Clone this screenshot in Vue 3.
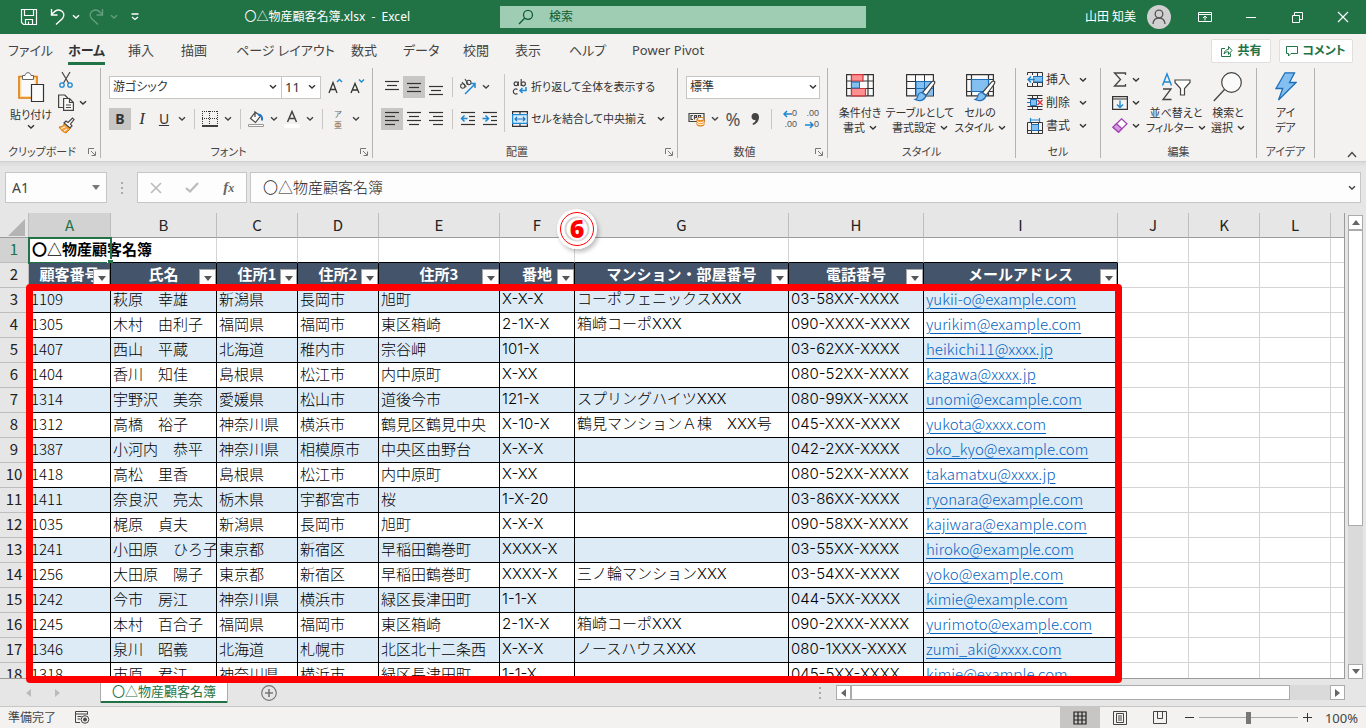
<script setup>
import { h } from 'vue'

const Chev = () =>
  h('svg', { class: 'chev', width: 8, height: 6, viewBox: '0 0 8 6', 'aria-hidden': 'true' }, [
    h('path', { d: 'M1 1.2 4 4 7 1.2', fill: 'none', stroke: 'currentColor', 'stroke-width': 1.4 }),
  ])

const Launcher = () =>
  h('svg', { width: 8, height: 8, viewBox: '0 0 8 8', 'aria-hidden': 'true' }, [
    h('path', { d: 'M.5 6V.5H6M3 3l4 4M7.5 3.500V7.500H3.500', fill: 'none', stroke: '#777', 'stroke-width': 1 }),
  ])

const Lines = (props) =>
  h('svg', { width: 16, height: 18, viewBox: '0 0 16 18', 'aria-hidden': 'true' },
    props.rows.map(([x, y, w]) =>
      h('path', { d: `M${x} ${y}.5h${w}`, stroke: '#333', 'stroke-width': 1.2 }))
      .concat(props.arrow ? [h('path', { d: props.arrow, fill: 'none', stroke: '#1e88d2', 'stroke-width': 1.5 })] : []))
Lines.props = ['rows', 'arrow']

const tabs = ['ファイル', 'ホーム', '挿入', '描画', 'ページ レイアウト', '数式', 'データ', '校閲', '表示', 'ヘルプ', 'Power Pivot']

const vertical = [
  { name: '上揃え', rows: [[1, 3, 14], [3, 7, 10], [1, 11, 14]] },
  { name: '上下中央揃え', on: true, rows: [[1, 5, 14], [3, 9, 10], [1, 13, 14]] },
  { name: '下揃え', rows: [[1, 8, 14], [3, 12, 10], [1, 16, 14]] },
]
const horizontal = [
  { name: '左揃え', on: true, rows: [[1, 2, 14], [1, 6, 10], [1, 10, 14], [1, 14, 10]] },
  { name: '中央揃え', rows: [[1, 2, 14], [3, 6, 10], [1, 10, 14], [3, 14, 10]] },
  { name: '右揃え', rows: [[1, 2, 14], [5, 6, 10], [1, 10, 14], [5, 14, 10]] },
]
const indents = [
  { name: 'インデントを減らす', rows: [[1, 2, 14], [9, 6, 6], [9, 10, 6], [1, 14, 14]], arrow: 'M7.500 8.500H2M4.500 5.500 1.500 8.500l3 3' },
  { name: 'インデントを増やす', rows: [[1, 2, 14], [9, 6, 6], [9, 10, 6], [1, 14, 14]], arrow: 'M.5 8.500H6M3.500 5.500l3 3-3 3' },
]

const letters = ['A', 'B', 'C', 'D', 'E', 'F', 'G', 'H', 'I', 'J', 'K', 'L']
const heads = ['顧客番号', '氏名', '住所1', '住所2', '住所3', '番地', 'マンション・部屋番号', '電話番号', 'メールアドレス']
const rows = [
  ['1109', '萩原　幸雄', '新潟県', '長岡市', '旭町', 'X-X-X', 'コーポフェニックスXXX', '03-58XX-XXXX', 'yukii-o@example.com'],
  ['1305', '木村　由利子', '福岡県', '福岡市', '東区箱崎', '2-1X-X', '箱崎コーポXXX', '090-XXXX-XXXX', 'yurikim@example.com'],
  ['1407', '西山　平蔵', '北海道', '稚内市', '宗谷岬', '101-X', '', '03-62XX-XXXX', 'heikichi11@xxxx.jp'],
  ['1404', '香川　知佳', '島根県', '松江市', '内中原町', 'X-XX', '', '080-52XX-XXXX', 'kagawa@xxxx.jp'],
  ['1314', '宇野沢　美奈', '愛媛県', '松山市', '道後今市', '121-X', 'スプリングハイツXXX', '080-99XX-XXXX', 'unomi@excample.com'],
  ['1312', '高橋　裕子', '神奈川県', '横浜市', '鶴見区鶴見中央', 'X-10-X', '鶴見マンションＡ棟　XXX号', '045-XXX-XXXX', 'yukota@xxxx.com'],
  ['1387', '小河内　恭平', '神奈川県', '相模原市', '中央区由野台', 'X-X-X', '', '042-2XX-XXXX', 'oko_kyo@example.com'],
  ['1418', '高松　里香', '島根県', '松江市', '内中原町', 'X-XX', '', '080-52XX-XXXX', 'takamatxu@xxxx.jp'],
  ['1411', '奈良沢　亮太', '栃木県', '宇都宮市', '桜', '1-X-20', '', '03-86XX-XXXX', 'ryonara@example.com'],
  ['1035', '梶原　貞夫', '新潟県', '長岡市', '旭町', 'X-X-X', '', '090-58XX-XXXX', 'kajiwara@example.com'],
  ['1241', '小田原　ひろ子', '東京都', '新宿区', '早稲田鶴巻町', 'XXXX-X', '', '03-55XX-XXXX', 'hiroko@example.com'],
  ['1256', '大田原　陽子', '東京都', '新宿区', '早稲田鶴巻町', 'XXXX-X', '三ノ輪マンションXXX', '03-54XX-XXXX', 'yoko@example.com'],
  ['1242', '今市　房江', '神奈川県', '横浜市', '緑区長津田町', '1-1-X', '', '044-5XX-XXXX', 'kimie@example.com'],
  ['1245', '本村　百合子', '福岡県', '福岡市', '東区箱崎', '2-1X-X', '箱崎コーポXXX', '090-2XXX-XXXX', 'yurimoto@example.com'],
  ['1346', '泉川　昭義', '北海道', '札幌市', '北区北十二条西', 'X-X-X', 'ノースハウスXXX', '080-1XXX-XXXX', 'zumi_aki@xxxx.com'],
  ['1318', '市原　君江', '神奈川県', '横浜市', '緑区長津田町', '1-1-X', '', '045-5XX-XXXX', 'kimie@example.com'],
]
</script>

<template>
  <div class="app">
    <header class="titlebar">
      <div class="tb-left">
        <button class="qat" aria-label="上書き保存">
          <svg width="18" height="18" viewBox="0 0 18 18" fill="none" stroke="#fff" stroke-width="1.2"><path d="M1.500 1.500h15v15h-13l-2-2zM4.500 1.500v6h9v-6M5.500 16.500v-5h7v5M8.500 16.500v-3" /></svg>
        </button>
        <button class="qat wide" aria-label="元に戻す">
          <svg width="16" height="18" viewBox="0 0 16 18" fill="none" stroke="#fff" stroke-width="1.4"><path d="M1.500 1v6h6M1.500 7C4 3.500 7 1.500 10 2.200c4 1 5 5.500 2.500 8.300L6 16.500" /></svg>
          <Chev />
        </button>
        <button class="qat wide dim" aria-label="やり直し">
          <svg width="16" height="18" viewBox="0 0 16 18" fill="none" stroke="#fff" stroke-width="1.400"><path d="M14.500 1v6h-6M14.500 7C12 3.500 9 1.500 6 2.200c-4 1-5 5.500-2.500 8.300L10 16.500" /></svg>
          <Chev />
        </button>
        <button class="qat" aria-label="クイック アクセス ツール バーのユーザー設定">
          <svg width="8" height="8" viewBox="0 0 8 8" fill="none" stroke="#fff" stroke-width="1.300"><path d="M.5 1h7M1 4l3 2.500L7 4" /></svg>
        </button>
        <h1>〇△物産顧客名簿.xlsx&nbsp; -&nbsp; Excel</h1>
      </div>
      <label class="search">
        <svg width="16" height="16" viewBox="0 0 16 16" fill="none" stroke="#0e5c33" stroke-width="1.300"><circle cx="10" cy="5.800" r="4.500" /><path d="M6.800 9 1 15" /></svg>
        <input type="text" placeholder="検索" aria-label="検索" />
      </label>
      <div class="tb-right">
        <span class="user">山田 知美</span>
        <svg class="avatar" width="24" height="24" viewBox="0 0 24 24" fill="none"><circle cx="12" cy="12" r="12" fill="#d0d0d0" /><circle cx="12" cy="9" r="3.800" stroke="#555" stroke-width="1.300" /><path d="M6 19c.3-4 2.700-6 6-6s5.700 2 6 6" stroke="#555" stroke-width="1.300" /></svg>
        <button class="win" aria-label="リボンの表示オプション"><svg width="14" height="12" viewBox="0 0 14 12" fill="none" stroke="#fff"><path d="M.5 1.500h13v9H.5zM.5 3.500h13M7 9.500v-4M5 7l2-2 2 2" /></svg></button>
        <button class="win" aria-label="最小化"><svg width="12" height="12" viewBox="0 0 12 12" stroke="#fff"><path d="M1 6.500h10" /></svg></button>
        <button class="win" aria-label="元のサイズに戻す"><svg width="11" height="11" viewBox="0 0 11 11" fill="none" stroke="#fff"><path d="M.5 3.500h7v7h-7zM2.500 3.500v-3h8v7h-3" /></svg></button>
        <button class="win" aria-label="閉じる"><svg width="12" height="12" viewBox="0 0 12 12" stroke="#fff" stroke-width="1.200"><path d="m1 1 10 10M11 1 1 11" /></svg></button>
      </div>
    </header>

    <nav class="tabbar">
      <div class="tabs">
        <button v-for="t in tabs" :key="t" :class="{ current: t === 'ホーム' }">{{ t }}</button>
      </div>
      <button class="pill share">
        <svg width="13" height="13" viewBox="0 0 13 13" fill="none" stroke="#217346"><path d="M5 3.500H1.500v8h9v-3M4 9c.5-3 2-4.500 4.500-4.500v-3l3.500 4-3.500 4V6.800C6.500 6.800 5 7.500 4 9z" /></svg>共有
      </button>
      <button class="pill comment">
        <svg width="12" height="12" viewBox="0 0 12 12" fill="none" stroke="#217346"><path d="M.5 1.500h11v7H5L2.500 11V8.500h-2z" /></svg>コメント
      </button>
    </nav>

    <section class="ribbon">
      <div class="group g-clip">
        <div class="body">
          <button class="big paste">
            <svg width="28" height="31" viewBox="0 0 28 31" fill="none">
              <path d="M2 4.500h18v21.500H2z" fill="#fbdfa6" stroke="#e07b0c" stroke-width="1.600" />
              <path d="M4.500 7h13v17h-13z" fill="#fafafa" />
              <path d="M5.500 7.500v-4H8C8.500 1.500 9.500.7 11 .7s2.500.8 3 2.800h2.500v4z" fill="#fff" stroke="#666" />
              <path d="M14.500 12.500h12v17h-12z" fill="#fafafa" stroke="#333" stroke-width="1.200" />
            </svg>
            <span>貼り付け</span><Chev />
          </button>
          <div class="stack">
            <button aria-label="切り取り"><svg width="16" height="18" viewBox="0 0 16 18" fill="none"><path d="m4 1 6.500 11M12 1 5.500 12" stroke="#444" stroke-width="1.200" /><circle cx="4" cy="14" r="2.200" stroke="#1e88d2" stroke-width="1.300" /><circle cx="12" cy="14" r="2.200" stroke="#1e88d2" stroke-width="1.300" /></svg></button>
            <button aria-label="コピー"><svg width="16" height="17" viewBox="0 0 16 17" fill="none" stroke="#444" stroke-width="1.200"><path d="M5 13.500H.6V1h6.200l3 3" /><path d="M5.600 4.500h6l3.800 4v7.900H5.600zM11.500 4.500v4h3.900M8 11h5M8 13.500h5" fill="#fafafa" /></svg><Chev /></button>
            <button aria-label="書式のコピー/貼り付け"><svg width="17" height="17" viewBox="0 0 17 17" fill="none"><path d="M1 10c3 0 4-1 5.500-3.500l6 5L8 16C6 15.500 3 13.500 1 10z" fill="#f7a13b" stroke="#e07b0c" /><path d="M3 11.500 7 10M6 14l3-2" stroke="#fff" /><path d="m6 6 2-2 2 1.500L14.500 1 16 2.500 12.500 7l1.500 2-2 2z" fill="#fafafa" stroke="#444" stroke-width="1.200" /></svg></button>
          </div>
        </div>
        <footer><span>クリップボード</span><button aria-label="クリップボードの設定"><Launcher /></button></footer>
      </div>

      <div class="group g-font">
        <div class="body rows">
          <div class="line">
            <button class="combo name"><span>游ゴシック</span><Chev /></button><button class="combo size"><span>11</span><Chev /></button>
            <button class="ico" aria-label="フォント サイズの拡大"><svg width="18" height="18" viewBox="0 0 18 18" fill="none"><path d="M2 15 6 4.500 10 15M3.300 11.500h5.400" stroke="#333" stroke-width="1.300" /><path d="m10 4 2.500-2.500L15 4" stroke="#1e88d2" stroke-width="1.400" /></svg></button>
            <button class="ico" aria-label="フォント サイズの縮小"><svg width="18" height="18" viewBox="0 0 18 18" fill="none"><path d="M2 15 6 5.500 10 15M3.300 12h5.400" stroke="#333" stroke-width="1.300" /><path d="m10 1.500 2.500 2.500L15 1.500" stroke="#1e88d2" stroke-width="1.400" /></svg></button>
          </div>
          <div class="line">
            <button class="ico on"><b>B</b></button>
            <button class="ico"><i>I</i></button>
            <button class="ico"><u>U</u></button>
            <button class="dd" aria-label="下線の種類"><Chev /></button>
            <span class="sep"></span>
            <button class="ico" aria-label="罫線"><svg width="16" height="16" viewBox="0 0 16 16" fill="none" stroke="#333"><path d="M.5 0v14M15.500 0v14M0 .5h16M7.500 0v14M0 7.500h16" stroke-dasharray="1 1" /><path d="M0 15h16" stroke="#000" stroke-width="1.500" /></svg></button>
            <button class="dd" aria-label="罫線の種類"><Chev /></button>
            <span class="sep"></span>
            <button class="ico" aria-label="塗りつぶしの色"><svg width="18" height="18" viewBox="0 0 18 18" fill="none"><path d="M8 2.500 3.500 8.500l5 4 5-6.500-5.500-4zM8 7V1.500" fill="#fafafa" stroke="#444" stroke-width="1.200" /><path d="M11 4.500c3 0 4.500 2 4 6" stroke="#1e78c8" stroke-width="2" /><path d="M1.500 14.500h15v2h-15z" fill="#fff" stroke="#999" /></svg></button>
            <button class="dd" aria-label="塗りつぶしの色の選択"><Chev /></button>
            <button class="ico" aria-label="フォントの色"><svg width="18" height="18" viewBox="0 0 18 18" fill="none"><path d="M4.500 12 9 1.500 13.500 12M6 8.500h6" stroke="#444" stroke-width="1.500" /><path d="M1 14h16v4H1z" fill="#fff" /></svg></button>
            <button class="dd" aria-label="フォントの色の選択"><Chev /></button>
            <span class="sep"></span>
            <button class="ico ruby" aria-label="ふりがなの表示"><small>ア</small><small>亜</small></button>
            <button class="dd" aria-label="ふりがなの設定"><Chev /></button>
          </div>
        </div>
        <footer><span>フォント</span><button aria-label="フォントの設定"><Launcher /></button></footer>
      </div>

      <div class="group g-align">
        <div class="body">
          <div class="rows">
            <div class="line">
              <button v-for="a in vertical" :key="a.name" class="ico" :class="{ on: a.on }" :aria-label="a.name"><Lines :rows="a.rows" /></button>
              <span class="sep"></span>
              <button class="ico" aria-label="方向"><svg width="18" height="18" viewBox="0 0 18 18" fill="none"><g stroke="#444" stroke-width="1.100"><circle cx="3.800" cy="8" r="2.200" /><path d="m3 4 4.300 5.200M6 1l3.500 5.800" /><circle cx="9.800" cy="4.500" r="2.200" /></g><path d="M6 16 16 6M11.500 5.500H16V10" stroke="#1e88d2" stroke-width="1.500" /></svg></button>
              <button class="dd" aria-label="方向の選択"><Chev /></button>
            </div>
            <div class="line">
              <button v-for="a in horizontal" :key="a.name" class="ico" :class="{ on: a.on }" :aria-label="a.name"><Lines :rows="a.rows" /></button>
              <span class="sep"></span>
              <button v-for="a in indents" :key="a.name" class="ico" :aria-label="a.name"><Lines :rows="a.rows" :arrow="a.arrow" /></button>
            </div>
          </div>
          <span class="tall"></span>
          <div class="rows texts">
            <button class="line"><svg width="16" height="18" viewBox="0 0 16 18" fill="none" stroke-width="1.200"><g stroke="#444"><circle cx="4" cy="5.800" r="1.900" /><path d="M6.300 3.500V8M9.200 1v7" /><circle cx="11.400" cy="5.800" r="2" /><path d="M5.500 11.500c-2-1.300-4.200 0-4.200 2s2.200 3.300 4.200 2" /></g><path d="M14 9v3.500H8M10.500 10 8 12.500l2.500 2.500" stroke="#1e88d2" stroke-width="1.500" /></svg><span>折り返して全体を表示する</span></button>
            <button class="line"><svg width="16" height="16" viewBox="0 0 16 16" fill="none"><path d="M.6.600h14.800v14.800H.6zM8 .5v3M8 12.500v3" stroke="#333" stroke-width="1.200" /><path d="M.6 3.600h14.800v8.800H.6z" fill="#d9ecfa" stroke="#1e88d2" stroke-width="1.200" /><path d="M3 8h10M5 6 3 8l2 2M11 6l2 2-2 2" stroke="#1e78c8" stroke-width="1.200" /></svg><span>セルを結合して中央揃え</span><Chev /></button>
          </div>
        </div>
        <footer><span>配置</span><button aria-label="配置の設定"><Launcher /></button></footer>
      </div>

      <div class="group g-num">
        <div class="body rows">
          <div class="line"><button class="combo fmt"><span>標準</span><Chev /></button></div>
          <div class="line">
            <button class="ico" aria-label="通貨表示形式"><svg width="18" height="16" viewBox="0 0 18 16" fill="none"><path d="M1 2.500h15v8H1zM5 4.500H3v4h2M6.500 8.500v-4h2v2h-2M10.500 8.500v-4h2v4" stroke="#444" stroke-width="1.200" /><path d="M9 8v5.500c0 1 1.500 1.500 3.500 1.500s3.500-.5 3.500-1.500V8" fill="#f7a13b" stroke="#e07b0c" /><ellipse cx="12.500" cy="8" rx="3.500" ry="1.500" fill="#fff" stroke="#e07b0c" /><path d="M9 10.500c1 1.500 6 1.500 7 0M9 12.500c1 1.500 6 1.500 7 0" stroke="#fff" /></svg></button>
            <button class="dd" aria-label="通貨の選択"><Chev /></button>
            <button class="ico pct">%</button>
            <button class="ico" aria-label="桁区切りスタイル"><svg width="10" height="14" viewBox="0 0 10 14"><path d="M5 1c2.500 0 4 1.500 4 4 0 4-2.500 7-6 8l-.5-1.500C4.500 10.500 5.500 9.500 5.500 8 3 8.500 1.500 7 1.500 4.800 1.500 2.500 3 1 5 1z" fill="#444" /></svg></button>
            <span class="sep"></span>
            <button class="ico dec" aria-label="小数点以下の表示桁数を増やす"><span><svg width="9" height="8" viewBox="0 0 9 8" fill="none" stroke="#1e88d2" stroke-width="1.500"><path d="M9 4H1.500M4 1 1 4l3 3" /></svg>0</span><span>.00</span></button>
            <button class="ico dec" aria-label="小数点以下の表示桁数を減らす"><span>.00</span><span><svg width="9" height="8" viewBox="0 0 9 8" fill="none" stroke="#1e88d2" stroke-width="1.500"><path d="M0 4h7.500M5 1l3 3-3 3" /></svg>0</span></button>
          </div>
        </div>
        <footer><span>数値</span><button aria-label="数値の設定"><Launcher /></button></footer>
      </div>

      <div class="group g-style">
        <div class="body bigs">
          <button class="big">
            <svg width="28" height="31" viewBox="0 0 28 31" fill="none"><path d="M.6 2.600h26.800v21.200H.6zM.6 9h26.800M.6 16.500h26.800M5.500 2.500v21M22 2.500v21" fill="#fafafa" stroke="#333" stroke-width="1.200" /><path d="M5.500 2.600H17V9H5.500zM5.500 16.500h14v7.300h-14z" fill="#ff9092" stroke="#d13438" stroke-width="1.200" /><path d="M5.500 10h8v6h-8z" fill="#83bff0" stroke="#1e6fb8" /></svg>
            <span>条件付き</span><span>書式<Chev /></span>
          </button>
          <button class="big">
            <svg width="32" height="31" viewBox="0 0 32 31" fill="none"><path d="M2.600 2.600h26.800v21.200H2.600z" fill="#fafafa" stroke="#333" stroke-width="1.200" /><path d="M12 9.500h17v14H12z" fill="#83bff0" /><path d="M2.600 9.500h26.800M2.600 16.500h26.800M11.500 2.500v21M20.500 2.500v21" stroke="#333" /><path d="M12 9.500h17M12 16.500h17M12 9.500v14M20.500 9.500v14" stroke="#1e6fb8" /><path d="M30.500 9.500c-1-1-2.500 0-3.500 1.200l-8.500 9.800 3.500 3 7.500-10.500c1-1.300 1.700-2.700 1-3.500z" fill="#fff" stroke="#444" stroke-width="1.200" /><path d="M18 20.500c-3 0-4 2-4.300 4-.2 1.500-1 2.500-2.700 3 4 2 9.500 1.500 11-4z" fill="#83bff0" stroke="#1e6fb8" stroke-width="1.200" /></svg>
            <span>テーブルとして</span><span>書式設定<Chev /></span>
          </button>
          <button class="big">
            <svg width="32" height="31" viewBox="0 0 32 31" fill="none"><path d="M2.600 2.600h26.800v21.200H2.600zM2.600 7.500h26.800M7.500 2.500v21M24.500 2.500v21M2.600 19.500h26.800" fill="#fafafa" stroke="#333" stroke-width="1.200" /><path d="M7.500 7.500h17v12h-17z" fill="#83bff0" stroke="#1e6fb8" stroke-width="1.200" /><path d="M30.500 9.500c-1-1-2.500 0-3.500 1.200l-8.500 9.800 3.500 3 7.500-10.500c1-1.300 1.700-2.700 1-3.500z" fill="#fff" stroke="#444" stroke-width="1.200" /><path d="M18 20.500c-3 0-4 2-4.300 4-.2 1.500-1 2.500-2.700 3 4 2 9.500 1.500 11-4z" fill="#83bff0" stroke="#1e6fb8" stroke-width="1.200" /></svg>
            <span>セルの</span><span>スタイル<Chev /></span>
          </button>
        </div>
        <footer><span>スタイル</span></footer>
      </div>

      <div class="group g-cell">
        <div class="body">
          <div class="stack">
            <button><svg width="16" height="15" viewBox="0 0 16 15" fill="none"><path d="M.5.500h15v14H.5zM5.500.5v14M10.500.5v14M.5 4.500h15M.5 10.500h15" stroke="#333" /><path d="M6 4.500h9.500v5.500H6z" fill="#83bff0" stroke="#1e6fb8" /><path d="M0 3h6v8H0z" fill="#f3f2f1" /><path d="M8 7.500H1.500M4 4.500l-3 3 3 3" stroke="#1e88d2" stroke-width="1.500" /></svg><span>挿入</span><Chev /></button>
            <button><svg width="16" height="15" viewBox="0 0 16 15" fill="none"><path d="M.5.500h15M.5 14.500h15M.5 3.500h15M.5 11.500h15M5.500.5v3M10.500.5v3M5.500 11.500v3M10.500 11.500v3" stroke="#333" /><path d="M3.500 4.500h6v6h-6z" fill="#83bff0" stroke="#1e6fb8" /><path d="M0 7.500h3" stroke="#1e6fb8" /><path d="m10.500 5 5 5M15.500 5l-5 5" stroke="#e0393e" stroke-width="1.500" /></svg><span>削除</span><Chev /></button>
            <button><svg width="16" height="16" viewBox="0 0 16 16" fill="none"><path d="M.5 4.500h15v11H.5zM4.500 4.500v11M11.500 4.500v11M.5 12.500h15" stroke="#333" /><path d="M4.500 6.500h7v6h-7z" fill="#83bff0" stroke="#1e6fb8" /><path d="M3.500 0v4M12.500 0v4M3.500 2h9" stroke="#1e88d2" stroke-width="1.200" /></svg><span>書式</span><Chev /></button>
          </div>
        </div>
        <footer><span>セル</span></footer>
      </div>

      <div class="group g-edit">
        <div class="body">
          <div class="stack">
            <button aria-label="オート SUM"><svg width="16" height="15" viewBox="0 0 16 15" fill="none"><path d="M13.500 3V1H2.500l6 6.500-6 6.500h11v-2" stroke="#444" stroke-width="1.300" /></svg><Chev /></button>
            <button aria-label="フィル"><svg width="16" height="14" viewBox="0 0 16 14" fill="none"><path d="M.6.600h14.800v12.800H.6zM.6 3h14.800" stroke="#333" stroke-width="1.200" /><path d="M8 4.500V11M5 8.500l3 3 3-3" stroke="#1e88d2" stroke-width="1.400" /></svg><Chev /></button>
            <button aria-label="クリア"><svg width="16" height="15" viewBox="0 0 16 15" fill="none" stroke="#a03fb0" stroke-width="1.200"><path d="m9.500.8 5.500 5-8.500 8.400-5.500-5z" fill="#fff" /><path d="m4.500 5.700 5.500 5-3.500 3.500-5.500-5z" fill="#d59ae0" /></svg><Chev /></button>
          </div>
          <button class="big">
            <svg width="30" height="31" viewBox="0 0 30 31" fill="none"><path d="M1.500 13.500 6 2l4.500 11.500M3 10h6" stroke="#1e88d2" stroke-width="1.400" /><path d="M2 17h8L2 27.500h8.500" stroke="#444" stroke-width="1.300" /><path d="M14 8h15v2.500l-5.500 6v6.500h-4v-6.500l-5.500-6z" fill="#fff" stroke="#444" stroke-width="1.200" /></svg>
            <span>並べ替えと</span><span>フィルター<Chev /></span>
          </button>
          <button class="big find">
            <svg width="30" height="31" viewBox="0 0 30 31" fill="none"><circle cx="18.500" cy="10.500" r="9.800" fill="#fafafa" stroke="#444" stroke-width="1.200" /><path d="M11.500 17.500.8 29" stroke="#444" stroke-width="1.300" /></svg>
            <span>検索と</span><span>選択<Chev /></span>
          </button>
        </div>
        <footer><span>編集</span></footer>
      </div>

      <div class="group g-idea">
        <div class="body">
          <button class="big">
            <svg width="22" height="31" viewBox="0 0 22 31" fill="none"><path d="M10 .8h9.500l-5 9.700H21L3.500 28l4.200-11.500H1z" fill="#83bff0" stroke="#1e6fb8" stroke-width="1.300" /></svg>
            <span>アイ</span><span>デア</span>
          </button>
        </div>
        <footer><span>アイデア</span></footer>
      </div>
      <button class="collapse" aria-label="リボンを折りたたむ"><svg width="10" height="7" viewBox="0 0 10 7" fill="none" stroke="#444" stroke-width="1.300"><path d="m1 6 4-4.500L9 6" /></svg></button>
    </section>

    <section class="formula">
      <div class="namebox"><input type="text" value="A1" aria-label="名前ボックス" /><svg width="8" height="5" viewBox="0 0 8 5"><path d="M0 0h8L4 5z" fill="#777" /></svg></div>
      <span class="dots"></span>
      <div class="fx">
        <button aria-label="キャンセル"><svg width="12" height="12" viewBox="0 0 12 12" stroke="#bbb" stroke-width="1.600"><path d="m1 1 10 10M11 1 1 11" /></svg></button>
        <button aria-label="入力"><svg width="14" height="11" viewBox="0 0 14 11" fill="none" stroke="#bbb" stroke-width="2.200"><path d="m1 6 4 3.500L13 1" /></svg></button>
        <button aria-label="関数の挿入"><em>f<small>x</small></em></button>
      </div>
      <div class="finput"><input type="text" value="〇△物産顧客名簿" aria-label="数式バー" /><button aria-label="数式バーの展開"><Chev /></button></div>
    </section>

    <main class="work">
      <div class="gridbox">
        <div class="clip">
          <table>
            <colgroup>
              <col class="w-n" /><col class="w-a" /><col class="w-b" /><col class="w-c" /><col class="w-c" /><col class="w-e" /><col class="w-f" /><col class="w-g" /><col class="w-h" /><col class="w-i" /><col class="w-j" /><col class="w-j" /><col class="w-j" /><col />
            </colgroup>
            <thead>
              <tr>
                <th class="corner"><svg width="17" height="17" viewBox="0 0 17 17"><path d="M17 0v17H0z" fill="#b4b4b4" /></svg></th>
                <th v-for="l in letters" :key="l" scope="col" :class="{ sel: l === 'A' }">{{ l }}</th>
                <th></th>
              </tr>
            </thead>
            <tbody>
              <tr class="r1">
                <th scope="row" class="sel">1</th>
                <td class="a1">〇△物産顧客名簿<span class="cursor"></span></td>
                <td v-for="n in 12" :key="n"></td>
              </tr>
              <tr class="r2">
                <th scope="row">2</th>
                <td v-for="t in heads" :key="t" class="d">{{ t }}<button :aria-label="t + 'のフィルター'"><svg width="8" height="5" viewBox="0 0 8 5"><path d="M0 0h8L4 5z" fill="#555" /></svg></button></td>
                <td v-for="n in 4" :key="n"></td>
              </tr>
              <tr v-for="(r, i) in rows" :key="i" :class="{ band: i % 2 === 0 }">
                <th scope="row">{{ i + 3 }}</th>
                <td v-for="(c, j) in r" :key="j" class="d" :class="{ code: j > 4 && j < 8 }"><a v-if="j === 8" href="#">{{ c }}</a><template v-else>{{ c }}</template></td>
                <td v-for="n in 4" :key="'x' + n"></td>
              </tr>
            </tbody>
          </table>
        </div>
        <div class="frame"></div>
        <div class="mark">6</div>
      </div>
      <div class="vscroll">
        <button aria-label="上へ"><svg width="8" height="5" viewBox="0 0 8 5"><path d="M0 5h8L4 0z" fill="#666" /></svg></button>
        <div class="thumb"></div>
        <div class="track"></div>
        <button aria-label="下へ"><svg width="8" height="5" viewBox="0 0 8 5"><path d="M0 0h8L4 5z" fill="#666" /></svg></button>
      </div>
    </main>

    <section class="sheets">
      <div class="nav">
        <button aria-label="前のシート"><svg width="5" height="8" viewBox="0 0 5 8"><path d="M5 0v8L0 4z" fill="#bbb" /></svg></button>
        <button aria-label="次のシート"><svg width="5" height="8" viewBox="0 0 5 8"><path d="M0 0v8l5-4z" fill="#bbb" /></svg></button>
      </div>
      <button class="sheet">〇△物産顧客名簿</button>
      <button class="add" aria-label="新しいシート"><svg width="16" height="16" viewBox="0 0 16 16" fill="none" stroke="#777"><circle cx="8" cy="8" r="7.300" stroke-width="1.200" /><path d="M8 4v8M4 8h8" stroke-width="1.600" /></svg></button>
      <span class="dots"></span>
      <div class="hscroll">
        <button aria-label="左へ"><svg width="5" height="8" viewBox="0 0 5 8"><path d="M5 0v8L0 4z" fill="#666" /></svg></button>
        <div class="thumb"></div>
        <div class="track"></div>
        <button aria-label="右へ"><svg width="5" height="8" viewBox="0 0 5 8"><path d="M0 0v8l5-4z" fill="#666" /></svg></button>
      </div>
    </section>

    <footer class="status">
      <span class="ready">準備完了</span>
      <svg class="rec" width="15" height="13" viewBox="0 0 15 13" fill="none" stroke="#444"><path d="M5 11.500H.5V.5h12v3M.5 3h12M2.500 5.500h4M2.500 8h3" /><circle cx="10" cy="8.500" r="3.800" /><circle cx="10" cy="8.500" r="1.500" fill="#444" /></svg>
      <div class="views">
        <button class="on" aria-label="標準"><svg width="14" height="14" viewBox="0 0 14 14" fill="none" stroke="#222" stroke-width="1.200"><path d="M1 1h12v12H1zM5 1v12M9 1v12M1 5h12M1 9h12" /></svg></button>
        <button aria-label="ページ レイアウト"><svg width="14" height="14" viewBox="0 0 14 14" fill="none" stroke="#444"><path d="M.5.500h13v13H.5zM3.500 2.500h7v9h-7zM5 5h4M5 7h4M5 9h4" /></svg></button>
        <button aria-label="改ページ プレビュー"><svg width="14" height="14" viewBox="0 0 14 14" fill="none" stroke="#444"><path d="M.5.500h13v12H.5zM4.500.5v7h5v-7M9.500 7.500v-7" /></svg></button>
      </div>
      <button class="step" aria-label="縮小"><svg width="9" height="9" viewBox="0 0 9 9" stroke="#333"><path d="M0 4.500h9" /></svg></button>
      <input class="zoom" type="range" min="0" max="100" value="50" aria-label="ズーム" />
      <button class="step" aria-label="拡大"><svg width="9" height="9" viewBox="0 0 9 9" stroke="#333"><path d="M0 4.500h9M4.500 0v9" /></svg></button>
      <span class="pc">100%</span>
    </footer>
  </div>
</template>

<style>
body { margin: 0; }
</style>

<style scoped>
.app {
  display: flex; flex-direction: column; height: 100vh; min-height: 480px; overflow: hidden;
  font: 12px/16px "Noto Sans", "Noto Sans CJK JP", sans-serif; color: #444; background: #e6e6e6;
  font-feature-settings: "palt";
}
.app *, .app *::before { box-sizing: border-box; }
button { display: inline-flex; align-items: center; justify-content: center; padding: 0; border: 0; background: none; font: inherit; color: inherit; white-space: nowrap; font-feature-settings: inherit; }
input { font: inherit; color: inherit; border: 0; padding: 0; background: none; min-width: 0; outline: none; font-feature-settings: inherit; }
svg { flex: none; display: block; }

.titlebar { display: grid; grid-template-columns: 1fr 366px 1fr; align-items: center; height: 34px; flex: none; background: #217346; color: #fff; }
.tb-left { display: flex; align-items: center; padding-left: 20px; }
.qat { width: 18px; height: 24px; margin-right: 12px; }
.qat.wide { width: 28px; gap: 6px; margin-right: 10px; justify-content: flex-start; }
.qat.dim { opacity: .3; }
h1 { margin: 0 90px 0 auto; font: inherit; white-space: nowrap; font-feature-settings: normal; }
.search { display: flex; align-items: center; gap: 15px; height: 22px; padding-left: 18px; background: #9fcdb3; color: #0e5c33; }
.search input { flex: 1; }
.search input::placeholder { color: #0e5c33; opacity: 1; }
.tb-right { display: flex; align-items: center; justify-content: flex-end; }
.avatar { margin: 0 11px; }
.win { width: 46px; height: 34px; }

.tabbar { display: flex; align-items: center; height: 34px; flex: none; background: #f3f2f1; padding: 0 13px 0 8px; gap: 8px; }
.tabs { flex: 1; display: grid; grid-template-columns: 60px 60px 53px 55px 115px 52px 60px 52px 54px 63px auto; justify-content: start; font-size: 13px; }
.tabs button { justify-self: start; height: 28px; border-bottom: 3px solid transparent; }
.tabs .current { font-weight: 700; color: #333; border-color: #217346; }
.pill { height: 24px; gap: 4px; background: #fff; border: 1px solid #e1dfdd; border-radius: 2px; color: #217346; font-weight: 700; }
.share { width: 60px; }
.comment { width: 74px; }

.ribbon { display: flex; flex: none; height: 94px; background: #f3f2f1; border-bottom: 1px solid #d2d0ce; }
.group { display: flex; flex-direction: column; flex: none; height: 90px; border-right: 1px solid #b5b3b1; }
.body { display: flex; flex: 1; }
.rows { display: flex; flex-direction: column; gap: 10px; padding-top: 8px; }
.line { display: flex; align-items: center; height: 22px; }
.group > footer { display: flex; align-items: center; height: 12px; font-size: 11px; line-height: 12px; }
.group > footer span { flex: 1; text-align: center; }
.group > footer button { width: 16px; height: 12px; }
.ico { width: 22px; height: 22px; font-size: 14px; color: #333; }
.ico.on { background: #c8c6c4; }
.ico i { font-family: "Liberation Serif", serif; font-size: 17px; }
.ico.pct { font-size: 18px; color: #555; }
.ruby { flex-direction: column; }
.ruby small { font: 8px/11px "Noto Sans CJK JP", sans-serif; color: #666; }
.dd { width: 14px; height: 22px; }
.sep { width: 1px; height: 20px; background: #c8c6c4; margin: 0 4px 0 5px; }
.tall { width: 1px; height: 58px; margin: 6px 7px 0 3px; background: #c8c6c4; }
.combo { justify-content: space-between; height: 23px; padding: 0 4px 0 3px; background: #fff; border: 1px solid #c8c6c4; color: #333; }
.combo.name { width: 173px; }
.combo.size { width: 40px; margin: 0 4px 0 -1px; font-size: 13px; }
.combo.fmt { width: 134px; padding-right: 2px; }
.g-font .body, .g-num .body { padding-left: 8px; }
.g-clip { width: 101px; }
.g-font { width: 272px; }
.g-align { width: 305px; }
.g-align .body { padding-left: 8px; }
.texts { color: #333; }
.texts .line { justify-content: flex-start; gap: 3px; font-size: 11px; }
.texts .chev { margin-left: 8px; }
.g-num { width: 150px; }
.dec { flex-direction: column; color: #555; }
.dec span { display: flex; align-items: center; justify-content: flex-end; width: 20px; font: 9px/11px "Liberation Sans", sans-serif; }
.big { flex-direction: column; justify-content: flex-start; height: 68px; margin-top: 4px; font-size: 11px; line-height: 15px; color: #333; }
.big span { display: flex; align-items: center; gap: 4px; }
.big svg { margin-bottom: 2px; }
.big .chev { margin: 0; }
.paste { width: 54px; gap: 2px; margin-left: 4px; }
.stack { display: flex; flex-direction: column; }
.stack button { justify-content: flex-start; height: 23px; gap: 5px; color: #333; }
.g-clip .stack button { width: 32px; }
.g-style { width: 188px; }
.g-style .body { padding-left: 2px; }
.g-style .big { width: 60px; }
.g-cell { width: 85px; }
.g-cell .stack { padding-left: 11px; }
.g-cell .stack button { gap: 3px; }
.g-cell .chev { margin-left: 6px; }
.g-edit { width: 156px; }
.g-edit .stack { padding-left: 11px; width: 48px; }
.g-edit .stack button { gap: 4px; }
.g-edit .big { width: 54px; }
.g-edit .find { width: 50px; }
.g-idea { width: 58px; }
.g-idea .big { width: 57px; }
.collapse { width: 16px; height: 14px; margin: auto 6px 0 auto; align-self: flex-end; }

.formula { display: flex; flex: none; height: 51px; padding: 10px 5px; background: linear-gradient(#dadada, #e6e6e6 5px); }
.formula > div { display: flex; align-items: center; background: #fdfdfd; border: 1px solid #c6c6c6; }
.namebox { width: 102px; padding: 0 6px; }
.namebox input { flex: 1; font-size: 14px; }
.dots { width: 2px; height: 12px; align-self: center; background: repeating-linear-gradient(#aaa 0 2px, transparent 2px 5px); }
.formula .dots { margin: 0 14px; }
.formula .fx { width: 110px; justify-content: space-around; }
.fx em { font: italic 700 15px/20px "Liberation Serif", serif; color: #666; }
.fx small { font-size: 12px; }
.formula .finput { flex: 1; margin-left: 3px; padding: 0 4px 0 12px; }
.finput input { flex: 1; font: 15px/20px "Noto Sans CJK JP", sans-serif; font-weight: 300; color: #222; padding-bottom: 2px; font-feature-settings: normal; }

.work { display: flex; flex: 1; min-height: 0; }
.gridbox { position: relative; flex: 1; min-width: 0; }
.clip { height: 100%; overflow: hidden; border: solid #9b9b9b; border-width: 0 1px 1px 0; background: #e6e6e6; }
table { width: 100%; table-layout: fixed; border-spacing: 0; font: 15px/24px "Noto Sans CJK JP", sans-serif; font-weight: 300; font-feature-settings: normal; color: #000; }
.w-n { width: 29px; } .w-a { width: 82px; } .w-b { width: 106px; } .w-c { width: 81px; } .w-e { width: 121px; }
.w-f { width: 75px; } .w-g { width: 214px; } .w-h { width: 135px; } .w-i { width: 194px; } .w-j { width: 71px; }
th, td { height: 25px; padding: 0; white-space: nowrap; border: solid #d4d4d4; border-width: 0 1px 1px 0; }
th { font-weight: 400; color: #222; background: #e6e6e6; border-color: #bdbdbd; text-align: center; }
thead th { border-bottom-color: #9b9b9b; }
tbody { line-height: 22px; }
tbody th, tbody td { vertical-align: top; }
tr > :last-child { border-right: 0; }
th.sel { background: #d2d2d2; color: #217346; }
.corner svg { margin: 4px 0 0 8px; }
td { background: #fff; padding-left: 2px; }
td.d { border-color: #000; overflow: hidden; }
td.code { font-family: Inter, "Noto Sans CJK JP", sans-serif; }
.r1 td:nth-child(-n+10) { border-bottom-color: #000; }
.band td.d { background: #ddebf7; }
td a { color: #0563c1; text-underline-offset: 3px; }
td.a1 { position: relative; padding-left: 3px; font-weight: 700; }
.cursor { position: absolute; inset: -1px -2px -2px -1px; border: 2px solid #217346; }
.cursor::after { content: ""; position: absolute; right: -3px; bottom: -3px; width: 5px; height: 5px; background: #217346; border: solid #fff; border-width: 1px 0 0 1px; }
.r2 td.d { position: relative; padding: 0; background: #44546a; color: #fff; font-weight: 700; text-align: center; }
.r2 button { position: absolute; right: 0; bottom: 0; width: 17px; height: 18px; background: #fdfdfd; border: 1px solid #a6a6a6; }
.frame { position: absolute; top: 71px; bottom: -4px; left: 26px; width: 1096px; border: 7px solid #f00; border-radius: 4px; }
.mark { position: absolute; top: -4px; left: 557px; width: 40px; height: 40px; border-radius: 50%; background: radial-gradient(circle, #fff 10px, #d4d4d4 11px 12px, #fff 13px); color: #f00; font: 800 25px/39px "Open Sans", sans-serif; text-align: center; box-shadow: 2px 3px 4px rgba(0, 0, 0, .25); text-shadow: 0 0 3px #fff, 0 2px 2px #fff, 0 -2px 2px #fff; }
.mark::before { content: ""; position: absolute; inset: 3px; border: 1px solid #f00; border-radius: 50%; }

.vscroll { display: flex; flex-direction: column; width: 15px; margin: 2px 3px 0; }
.vscroll button, .hscroll button { width: 15px; height: 15px; flex: none; }
.vscroll button, .hscroll button, .thumb { background: #fff; border: 1px solid #ababab; }
.track { background: #dadada; }
.vscroll .thumb { flex: 295; }
.vscroll .track { flex: 139; }

.sheets { display: flex; height: 27px; flex: none; padding-right: 21px; }
.nav { display: flex; align-items: center; width: 100px; padding-left: 26px; gap: 24px; }
.sheet { width: 128px; height: 24px; background: #fff; border: solid #ababab; border-width: 0 1px; box-shadow: inset 0 -2px #217346; color: #217346; font-size: 13px; }
.add { width: 82px; }
.sheets .dots { margin: 0 15px 0 auto; }
.hscroll { display: flex; align-items: stretch; flex: 0 1 509px; height: 15px; margin-top: 6px; }
.hscroll .thumb { flex: 439; }
.hscroll .track { flex: 40; }

.status { display: flex; align-items: center; height: 22px; flex: none; background: #f3f2f1; border-top: 1px solid #c6c6c6; padding: 0 8px; }
.rec { margin-left: 19px; }
.views { display: flex; align-self: stretch; margin-left: auto; }
.views button { width: 40px; }
.views .on { background: #c8c6c4; }
.step { width: 19px; height: 16px; }
.zoom { appearance: none; width: 99px; height: 12px; margin: 0; background: linear-gradient(#aaa, #aaa) center / 100% 1px no-repeat; }
.zoom::-webkit-slider-thumb { appearance: none; width: 5px; height: 12px; background: #777; }
.pc { width: 41px; text-align: right; font-size: 13px; }
</style>
